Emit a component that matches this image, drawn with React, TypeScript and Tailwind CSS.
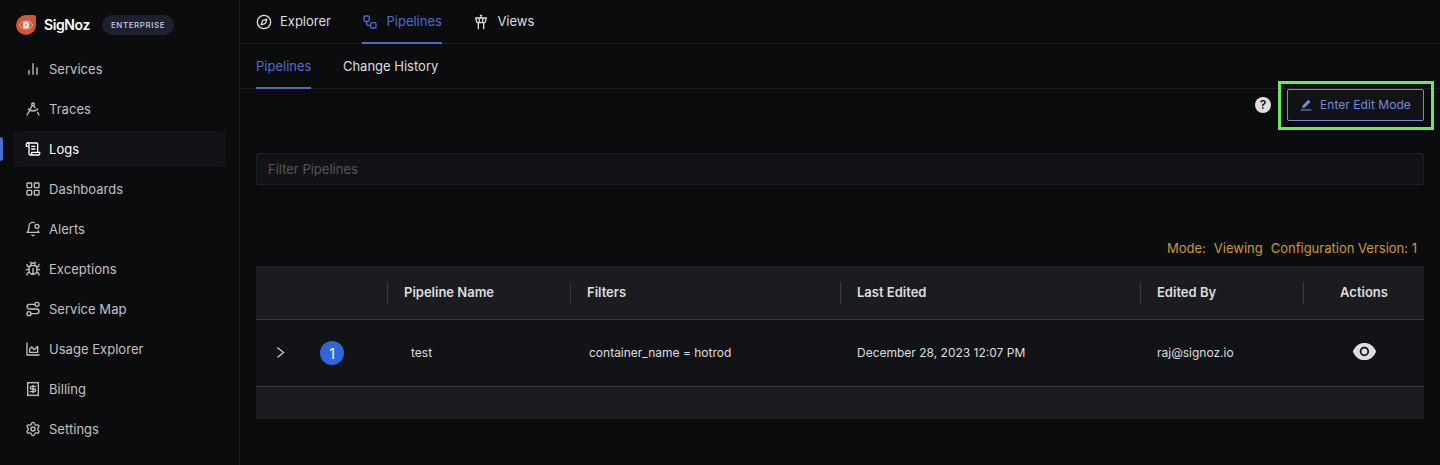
import type { ReactNode } from 'react';
import { Settings } from 'lucide-react';
import { AiFillEye, AiOutlineRight } from 'react-icons/ai';

function Icon({ children }: { children: ReactNode }) {
  return (
    <svg
      className="size-4 shrink-0"
      viewBox="0 0 24 24"
      fill="none"
      stroke="currentColor"
      strokeWidth="2"
      strokeLinecap="round"
      strokeLinejoin="round"
    >
      {children}
    </svg>
  );
}

const navItems: { label: string; icon: ReactNode; active?: boolean }[] = [
  { label: 'Services', icon: <Icon><path d="M18 20V10M12 20V4M6 20v-6" /></Icon> },
  {
    label: 'Traces',
    icon: (
      <Icon>
        <circle cx="12" cy="5" r="2" />
        <path d="m3 21 8.02-14.26M12.99 6.74l1.93 3.44M19 12c-3.87 4-10.13 4-14 0M21 21l-2.16-3.84" />
      </Icon>
    ),
  },
  {
    label: 'Logs',
    active: true,
    icon: (
      <Icon>
        <path d="M8 21h12a2 2 0 0 0 2-2v-2H10v2a2 2 0 1 1-4 0V5a2 2 0 1 0-4 0v3h4" />
        <path d="M19 17V5a2 2 0 0 0-2-2H4M15 8h-5M15 12h-5" />
      </Icon>
    ),
  },
  {
    label: 'Dashboards',
    icon: (
      <Icon>
        <rect x="3" y="3" width="7" height="7" rx="1" />
        <rect x="14" y="3" width="7" height="7" rx="1" />
        <rect x="14" y="14" width="7" height="7" rx="1" />
        <rect x="3" y="14" width="7" height="7" rx="1" />
      </Icon>
    ),
  },
  {
    label: 'Alerts',
    icon: (
      <Icon>
        <path d="M19.4 14.9C20.2 16.4 21 17 21 17H3s3-2 3-9c0-3.3 2.7-6 6-6 .7 0 1.3.1 1.9.3M10.3 21a1.94 1.94 0 0 0 3.4 0" />
        <circle cx="18" cy="8" r="3" />
      </Icon>
    ),
  },
  {
    label: 'Exceptions',
    icon: (
      <Icon>
        <path d="m8 2 1.88 1.88M14.12 3.88 16 2M9 7.13v-1a3.003 3.003 0 1 1 6 0v1" />
        <path d="M12 20c-3.3 0-6-2.7-6-6v-3a4 4 0 0 1 4-4h4a4 4 0 0 1 4 4v3c0 3.3-2.7 6-6 6M12 20v-9" />
        <path d="M6.53 9C4.6 8.8 3 7.1 3 5M6 13H2M3 21c0-2.1 1.7-3.9 3.8-4M20.97 5c0 2.1-1.6 3.8-3.5 4M22 13h-4M17.2 17c2.1.1 3.8 1.9 3.8 4" />
      </Icon>
    ),
  },
  {
    label: 'Service Map',
    icon: (
      <Icon>
        <circle cx="6" cy="19" r="3" />
        <path d="M9 19h8.5a3.5 3.5 0 0 0 0-7h-11a3.5 3.5 0 0 1 0-7H15" />
        <circle cx="18" cy="5" r="3" />
      </Icon>
    ),
  },
  { label: 'Usage Explorer', icon: <Icon><path d="M3 3v18h18M7 12v5h12V8l-5 5-4-4Z" /></Icon> },
  {
    label: 'Billing',
    icon: (
      <Icon>
        <path d="M4 2v20l2-1 2 1 2-1 2 1 2-1 2 1 2-1 2 1V2l-2 1-2-1-2 1-2-1-2 1-2-1-2 1Z" />
        <path d="M16 8h-6a2 2 0 1 0 0 4h4a2 2 0 1 1 0 4H8M12 17.5v-11" />
      </Icon>
    ),
  },
  { label: 'Settings', icon: <Settings className="size-4 shrink-0" /> },
];

function Logo() {
  return (
    <svg className="size-5" viewBox="0 0 20 20">
      <path d="M10 0h8a2 2 0 0 1 2 2v8A10 10 0 1 1 10 0Z" fill="#d2553a" />
      <path d="M3.200 10C5 7.200 7.200 6 10 6s5 1.200 6.800 4c-1.800 2.800-4 4-6.800 4s-5-1.200-6.800-4Z" fill="none" stroke="#f3cfc5" strokeWidth="0.800" />
      <circle cx="10" cy="10" r="3.300" fill="#fbeeea" />
      <circle cx="10" cy="10" r="1.300" fill="#dd8573" />
      <circle cx="9.300" cy="9.300" r="0.600" fill="#fbeeea" />
    </svg>
  );
}

function Sidebar() {
  return (
    <aside className="w-60 shrink-0 border-r border-[#1d1f24]">
      <div className="flex h-[50px] items-center pl-4">
        <Logo />
        <span className="mb-0.5 ml-2 w-[58px] text-[14px] font-semibold tracking-[-0.4px] text-white">SigNoz</span>
        <span className="flex h-5 w-[72px] items-center justify-center rounded-full bg-[#1d212d] text-[8px] font-medium tracking-[0.55px] text-[#c9cfe0]">
          ENTERPRISE
        </span>
      </div>
      <nav className="flex flex-col gap-1 pt-px">
        {navItems.map((item) => (
          <div key={item.label} className="flex h-9 items-center">
            <span className={item.active ? 'h-6 w-[3px] rounded-r-[3px] bg-[#4e6bd0]' : 'w-[3px]'} />
            <div
              className={
                item.active
                  ? 'ml-[10px] flex h-9 w-[213px] items-center gap-2 rounded-sm bg-[#121317] pl-3 text-white'
                  : 'ml-[10px] flex h-9 w-[213px] items-center gap-2 pl-3 text-[#c0c1c3]'
              }
            >
              {item.icon}
              <span className="pt-px text-[13px] tracking-[0.03px]">{item.label}</span>
            </div>
          </div>
        ))}
      </nav>
    </aside>
  );
}

function Tabs() {
  return (
    <>
      <div className="flex h-11 gap-8 border-b border-[#1f2024] pl-4 text-[13px]">
        <div className="flex h-[43px] items-center gap-2 text-[#dededf]">
          <Icon>
            <circle cx="12" cy="12" r="10" />
            <path d="m16.240 7.760-2.120 6.360-6.360 2.120 2.120-6.360z" />
          </Icon>
          <span>Explorer</span>
        </div>
        <div className="-ml-[0.5px] flex h-11 items-center gap-2 border-b-2 border-[#4e6bd0] pt-px text-[#4e6bd0]">
          <Icon>
            <rect x="3" y="3" width="8" height="8" rx="2" />
            <path d="M7 11v4a2 2 0 0 0 2 2h4" />
            <rect x="13" y="13" width="8" height="8" rx="2" />
          </Icon>
          <span>Pipelines</span>
        </div>
        <div className="-ml-[0.5px] flex h-[43px] items-center gap-2 text-[#dededf]">
          <Icon>
            <path d="M18.200 12.270 20 6H4l1.800 6.270a1 1 0 0 0 .95.73h10.500a1 1 0 0 0 .96-.73ZM8 13v9M16 22v-9M9 6l1 7M15 6l-1 7M12 6V2M13 2h-2" />
          </Icon>
          <span>Views</span>
        </div>
      </div>
      <div className="flex h-[45px] gap-8 border-b border-[#1f2024] pl-4 text-[13px]">
        <div className="flex h-[45px] items-center border-b-2 border-[#4e6bd0] pt-0.5 text-[#4e6bd0]">Pipelines</div>
        <div className="-ml-[0.5px] flex h-[45px] items-center text-[#dededf]">Change History</div>
      </div>
    </>
  );
}

const headings = ['Pipeline Name', 'Filters', 'Last Edited', 'Edited By'];

function PipelineTable() {
  return (
    <div className="mx-4 h-[153px] bg-[#1b1c1f] text-[#dededf]">
      <div className="grid h-[54px] grid-cols-[132px_183px_270px_300px_163px_120px] items-center border-b border-[#38393c] text-[13px] font-semibold">
        <div className="h-[22px] border-r border-[#38393c]" />
        {headings.map((heading) => (
          <div key={heading} className="flex h-[22px] items-center border-r border-[#38393c] pl-4">
            {heading}
          </div>
        ))}
        <div className="text-center">Actions</div>
      </div>
      <div className="grid h-[67px] grid-cols-[132px_183px_270px_300px_163px_120px] items-center border-b border-[#38393c] bg-[#121317] text-[12px]">
        <div className="flex items-center">
          <AiOutlineRight className="mb-px ml-[17px] size-[15px]" />
          <span className="ml-8 flex size-6 items-center justify-center rounded-full bg-[#3067d8] text-[14px] text-white">1</span>
        </div>
        <div className="pl-[23px]">test</div>
        <div className="pl-[18px]">container_name = hotrod</div>
        <div className="pl-4">December 28, 2023 12:07 PM</div>
        <div className="pl-4">raj@signoz.io</div>
        <AiFillEye className="mb-[3px] size-[27px] justify-self-center" />
      </div>
    </div>
  );
}

export default function App() {
  return (
    <div className="flex h-[465px] w-[1440px] overflow-hidden bg-[#0b0c0e] font-['Inter',sans-serif]">
      <Sidebar />
      <main className="relative min-w-0 flex-1">
        <Tabs />
        <div className="flex h-8 items-center justify-end gap-4 pr-4">
          <span className="flex size-4 items-center justify-center rounded-full bg-[#dededf] text-[12px] font-semibold text-[#0b0c0e]">
            ?
          </span>
          <button className="flex h-8 w-[137px] items-center gap-2 rounded-[2px] border border-[#728ad8] bg-[#121317] pl-3 text-[12px] text-[#728ad8]">
            <svg className="size-3" viewBox="0 0 12 12" fill="currentColor">
              <path d="M2.200 9.200 2.700 6.600 7.700 1.300Q8.300.700 8.900 1.300L9.900 2.300Q10.500 2.900 9.900 3.500L4.900 8.600Z" />
              <path d="M.700 10.400h10.600v1.100H.700Z" />
            </svg>
            <span className="tracking-[0.05px]">Enter Edit Mode</span>
          </button>
        </div>
        <div className="absolute top-[81px] right-[6px] h-[49px] w-[156px] border-3 border-[#66ed57]" />
        <div className="mx-4 mt-8 flex h-8 items-center rounded-[2px] border border-[#1f2024] bg-[#121317] pt-0.5 pl-[11px] text-[13px] text-[#54565a]">
          Filter Pipelines
        </div>
        <div className="mt-[54px] flex h-[27px] items-start justify-end gap-2 pr-[23px] text-[13px] text-[#d0982f]">
          <span>Mode:</span>
          <span>Viewing</span>
          <span>Configuration Version: 1</span>
        </div>
        <PipelineTable />
      </main>
    </div>
  );
}
